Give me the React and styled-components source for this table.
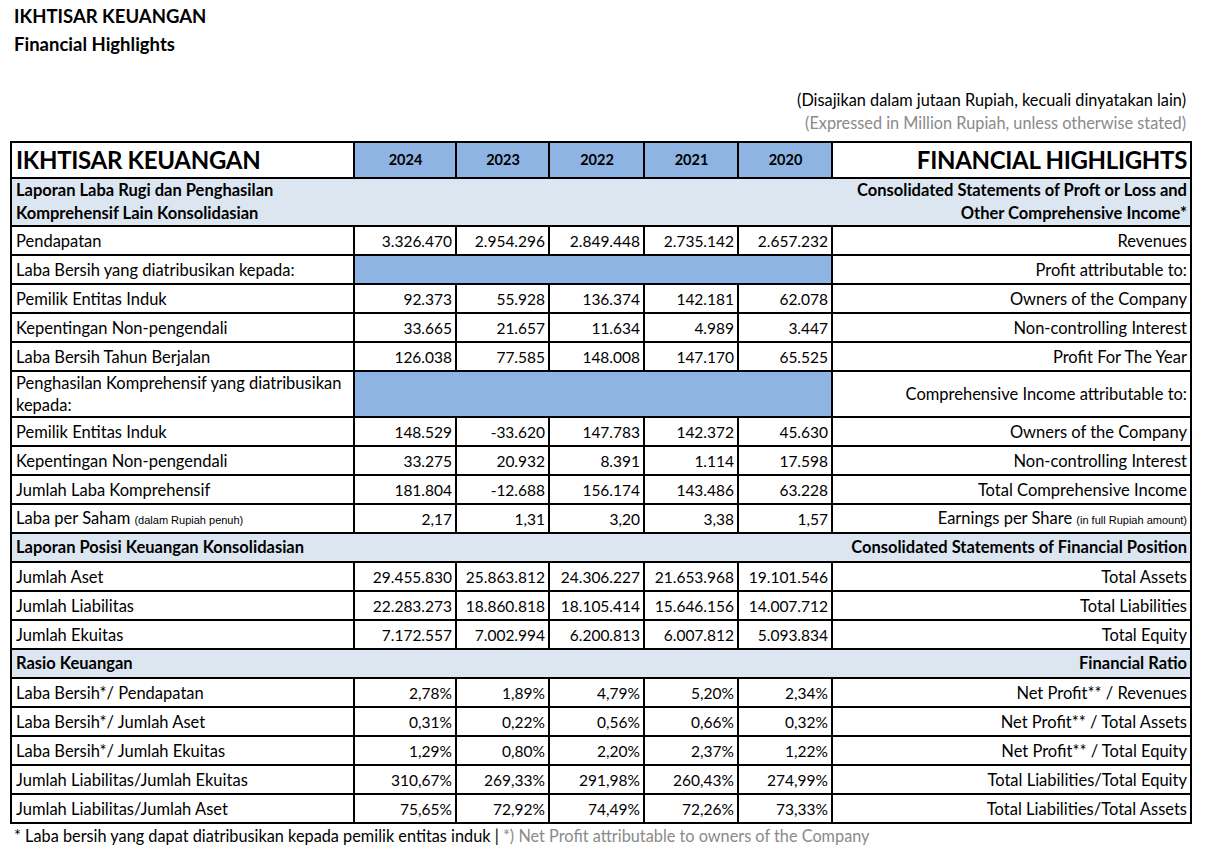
import styled, { createGlobalStyle } from "styled-components";

const GlobalStyle = createGlobalStyle`
	body {
		margin: 0;
		background: #fff;
		font-family: "Lato", "Open Sans", sans-serif;
		color: #000;
	}
`;

const Page = styled.div`
	width: 1205px;
	padding: 2px 0 0 10px;
	box-sizing: border-box;
`;

const Title = styled.div`
	font-size: 18.5px;
	font-weight: 700;
	line-height: 28px;
	padding-left: 4px;
`;

const Notes = styled.div`
	margin-top: 30px;
	width: 1180px;
	text-align: right;
	font-size: 16.3px;
	line-height: 23px;
	padding-right: 4px;
	box-sizing: border-box;
`;

const Note = styled.div`
	color: ${(p) => (p.$muted ? "#8a8a8a" : "#000")};
`;

const Table = styled.table`
	margin-top: 7px;
	width: 1180px;
	border-collapse: collapse;
	table-layout: fixed;
	border: 2px solid #000;
	font-size: 16.5px;
`;

const Cell = styled.td`
	border: 2px solid #000;
	padding: 0 3px 0 4px;
	line-height: 24px;
	height: 27px;
	text-align: ${(p) => p.$align || "left"};
	font-weight: ${(p) => (p.$bold ? 700 : 400)};
	font-size: ${(p) => (p.$num ? "15.5px" : "inherit")};
	background: ${(p) => p.$bg || "transparent"};
	white-space: nowrap;
	vertical-align: middle;
`;

const HeadCell = styled(Cell)`
	height: 34px;
	font-size: ${(p) => (p.$big ? "24px" : "14.5px")};
	text-align: ${(p) => p.$align || "center"};
	letter-spacing: ${(p) => (p.$big ? "-0.3px" : "0")};
`;

const SectionCell = styled(Cell)`
	font-weight: 700;
	font-size: 16.5px;
	line-height: 23px;
	background: #dce6f1;
	border-left: ${(p) => (p.$side === "right" ? "none" : "2px solid #000")};
	border-right: ${(p) => (p.$side === "left" ? "none" : "2px solid #000")};
	text-align: ${(p) => (p.$side === "right" ? "right" : "left")};
`;

const WrapCell = styled(Cell)`
	white-space: normal;
	line-height: 22px;
`;

const Small = styled.span`
	font-family: "Liberation Sans", Arial, sans-serif;
	font-size: 11px;
`;

const Footnote = styled.div`
	font-size: 16.3px;
	line-height: 24px;
	padding-left: 4px;
`;

const Muted = styled.span`
	color: #8a8a8a;
`;

const YEAR_BG = "#8db4e2";

const years = ["2024", "2023", "2022", "2021", "2020"];

const rows = [
	{
		kind: "section",
		left: ["Laporan Laba Rugi dan Penghasilan", "Komprehensif Lain Konsolidasian"],
		right: ["Consolidated Statements of Proft or Loss and", "Other Comprehensive Income*"],
	},
	{ left: "Pendapatan", values: ["3.326.470", "2.954.296", "2.849.448", "2.735.142", "2.657.232"], right: "Revenues" },
	{ kind: "fill", left: "Laba Bersih yang diatribusikan kepada:", right: "Profit attributable to:" },
	{ left: "Pemilik Entitas Induk", values: ["92.373", "55.928", "136.374", "142.181", "62.078"], right: "Owners of the Company" },
	{ left: "Kepentingan Non-pengendali", values: ["33.665", "21.657", "11.634", "4.989", "3.447"], right: "Non-controlling Interest" },
	{ left: "Laba Bersih Tahun Berjalan", values: ["126.038", "77.585", "148.008", "147.170", "65.525"], right: "Profit For The Year" },
	{
		kind: "fill",
		left: "Penghasilan Komprehensif yang diatribusikan kepada:",
		right: "Comprehensive Income attributable to:",
		wrap: true,
	},
	{ left: "Pemilik Entitas Induk", values: ["148.529", "-33.620", "147.783", "142.372", "45.630"], right: "Owners of the Company" },
	{ left: "Kepentingan Non-pengendali", values: ["33.275", "20.932", "8.391", "1.114", "17.598"], right: "Non-controlling Interest" },
	{ left: "Jumlah Laba Komprehensif", values: ["181.804", "-12.688", "156.174", "143.486", "63.228"], right: "Total Comprehensive Income" },
	{
		left: (
			<>
				Laba per Saham <Small>(dalam Rupiah penuh)</Small>
			</>
		),
		values: ["2,17", "1,31", "3,20", "3,38", "1,57"],
		right: (
			<>
				Earnings per Share <Small>(in full Rupiah amount)</Small>
			</>
		),
	},
	{ kind: "section", left: ["Laporan Posisi Keuangan Konsolidasian"], right: ["Consolidated Statements of Financial Position"] },
	{ left: "Jumlah Aset", values: ["29.455.830", "25.863.812", "24.306.227", "21.653.968", "19.101.546"], right: "Total Assets" },
	{ left: "Jumlah Liabilitas", values: ["22.283.273", "18.860.818", "18.105.414", "15.646.156", "14.007.712"], right: "Total Liabilities" },
	{ left: "Jumlah Ekuitas", values: ["7.172.557", "7.002.994", "6.200.813", "6.007.812", "5.093.834"], right: "Total Equity" },
	{ kind: "section", left: ["Rasio Keuangan"], right: ["Financial Ratio"] },
	{ left: "Laba Bersih*/ Pendapatan", values: ["2,78%", "1,89%", "4,79%", "5,20%", "2,34%"], right: "Net Profit** / Revenues" },
	{ left: "Laba Bersih*/ Jumlah Aset", values: ["0,31%", "0,22%", "0,56%", "0,66%", "0,32%"], right: "Net Profit** / Total Assets" },
	{ left: "Laba Bersih*/ Jumlah Ekuitas", values: ["1,29%", "0,80%", "2,20%", "2,37%", "1,22%"], right: "Net Profit** / Total Equity" },
	{ left: "Jumlah Liabilitas/Jumlah Ekuitas", values: ["310,67%", "269,33%", "291,98%", "260,43%", "274,99%"], right: "Total Liabilities/Total Equity" },
	{ left: "Jumlah Liabilitas/Jumlah Aset", values: ["75,65%", "72,92%", "74,49%", "72,26%", "73,33%"], right: "Total Liabilities/Total Assets" },
];

const renderRow = (row, i) => {
	if (row.kind === "section") {
		return (
			<tr key={i}>
				<SectionCell colSpan={4} $side="left">
					{row.left.map((line) => (
						<div key={line}>{line}</div>
					))}
				</SectionCell>
				<SectionCell colSpan={3} $side="right">
					{row.right.map((line) => (
						<div key={line}>{line}</div>
					))}
				</SectionCell>
			</tr>
		);
	}
	if (row.kind === "fill") {
		const Left = row.wrap ? WrapCell : Cell;
		return (
			<tr key={i}>
				<Left>{row.left}</Left>
				<Cell colSpan={5} $bg={YEAR_BG} />
				<Cell $align="right">{row.right}</Cell>
			</tr>
		);
	}
	return (
		<tr key={i}>
			<Cell>{row.left}</Cell>
			{row.values.map((v, j) => (
				<Cell key={j} $align="right" $num>
					{v}
				</Cell>
			))}
			<Cell $align="right">{row.right}</Cell>
		</tr>
	);
};

const App = () => {
	return (
		<Page>
			<GlobalStyle />
			<Title>IKHTISAR KEUANGAN</Title>
			<Title>Financial Highlights</Title>
			<Notes>
				<Note>(Disajikan dalam jutaan Rupiah, kecuali dinyatakan lain)</Note>
				<Note $muted>(Expressed in Million Rupiah, unless otherwise stated)</Note>
			</Notes>
			<Table>
				<colgroup>
					<col style={{ width: 343 }} />
					<col style={{ width: 102 }} />
					<col style={{ width: 93 }} />
					<col style={{ width: 95 }} />
					<col style={{ width: 94 }} />
					<col style={{ width: 94 }} />
					<col style={{ width: 359 }} />
				</colgroup>
				<tbody>
					<tr>
						<HeadCell $big $bold $align="left">
							IKHTISAR KEUANGAN
						</HeadCell>
						{years.map((y) => (
							<HeadCell key={y} $bold $bg={YEAR_BG}>
								{y}
							</HeadCell>
						))}
						<HeadCell $big $bold $align="right">
							FINANCIAL HIGHLIGHTS
						</HeadCell>
					</tr>
					{rows.map(renderRow)}
				</tbody>
			</Table>
			<Footnote>
				* Laba bersih yang dapat diatribusikan kepada pemilik entitas induk |{" "}
				<Muted>*) Net Profit attributable to owners of the Company</Muted>
			</Footnote>
		</Page>
	);
};

export default App;
